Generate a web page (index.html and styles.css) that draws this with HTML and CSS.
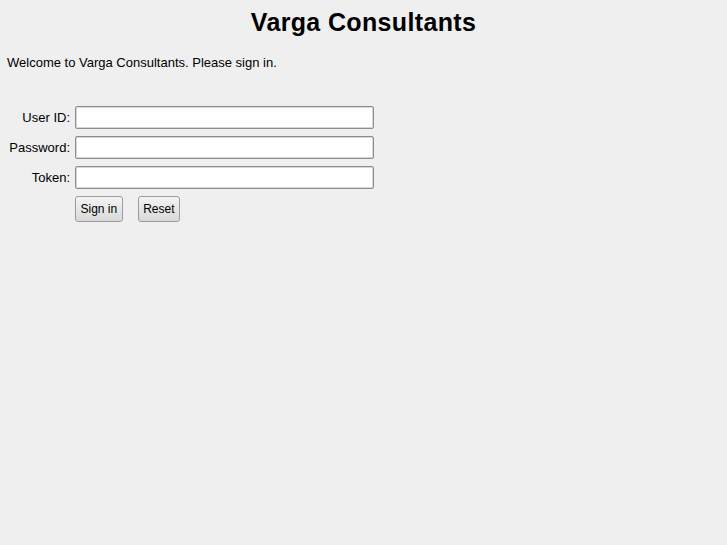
FILE: index.html
```html
<!DOCTYPE html>
<html>
<head>
<meta charset="utf-8">
<title>Varga Consultants</title>
<link rel="stylesheet" href="styles.css">
</head>
<body>
<h1 class="title">Varga Consultants</h1>
<p class="welcome">Welcome to Varga Consultants. Please sign in.</p>
<form class="login">
  <label class="lbl" for="uid">User ID:</label>
  <input class="field" id="uid" type="text">
  <label class="lbl" for="pw">Password:</label>
  <input class="field" id="pw" type="password">
  <label class="lbl" for="tok">Token:</label>
  <input class="field" id="tok" type="text">
  <span></span>
  <div class="actions">
    <button class="btn" type="button">Sign in</button>
    <button class="btn" type="reset">Reset</button>
  </div>
</form>
</body>
</html>
```
FILE: styles.css
```css
html, body {
  background: #efefef;
}
body {
  margin: 0;
  padding: 8px 8px 0 8px;
  font-family: "Liberation Sans", Arial, sans-serif;
  font-size: 13px;
  color: #000;
}
.title {
  margin: 0;
  font-size: 25px;
  font-weight: bold;
  letter-spacing: 0.35px;
  text-align: center;
  line-height: 28px;
}
.welcome {
  margin: 19px 0 0 -1px;
  line-height: 15px;
}
.login {
  margin-top: 36px;
  display: grid;
  grid-template-columns: 62px 299px;
  column-gap: 5px;
  row-gap: 7px;
  align-items: center;
}
.lbl {
  text-align: right;
}
.field {
  box-sizing: border-box;
  height: 23px;
  width: 299px;
  margin: 0;
  border: 1px solid #8e8e8e;
  border-radius: 2px;
  background: #fff;
  box-shadow: inset 0 0 0 1px #d6d6d6;
  font: inherit;
  padding: 0 4px;
}
.actions {
  display: flex;
  gap: 15px;
}
.btn {
  box-sizing: border-box;
  height: 26px;
  margin: 0;
  padding: 0 4.5px;
  border: 1px solid #9c9c9c;
  border-radius: 3px;
  background: linear-gradient(#f4f4f4, #d9d9d9);
  font-family: "Liberation Sans", Arial, sans-serif;
  font-size: 12px;
  color: #000;
}
```
